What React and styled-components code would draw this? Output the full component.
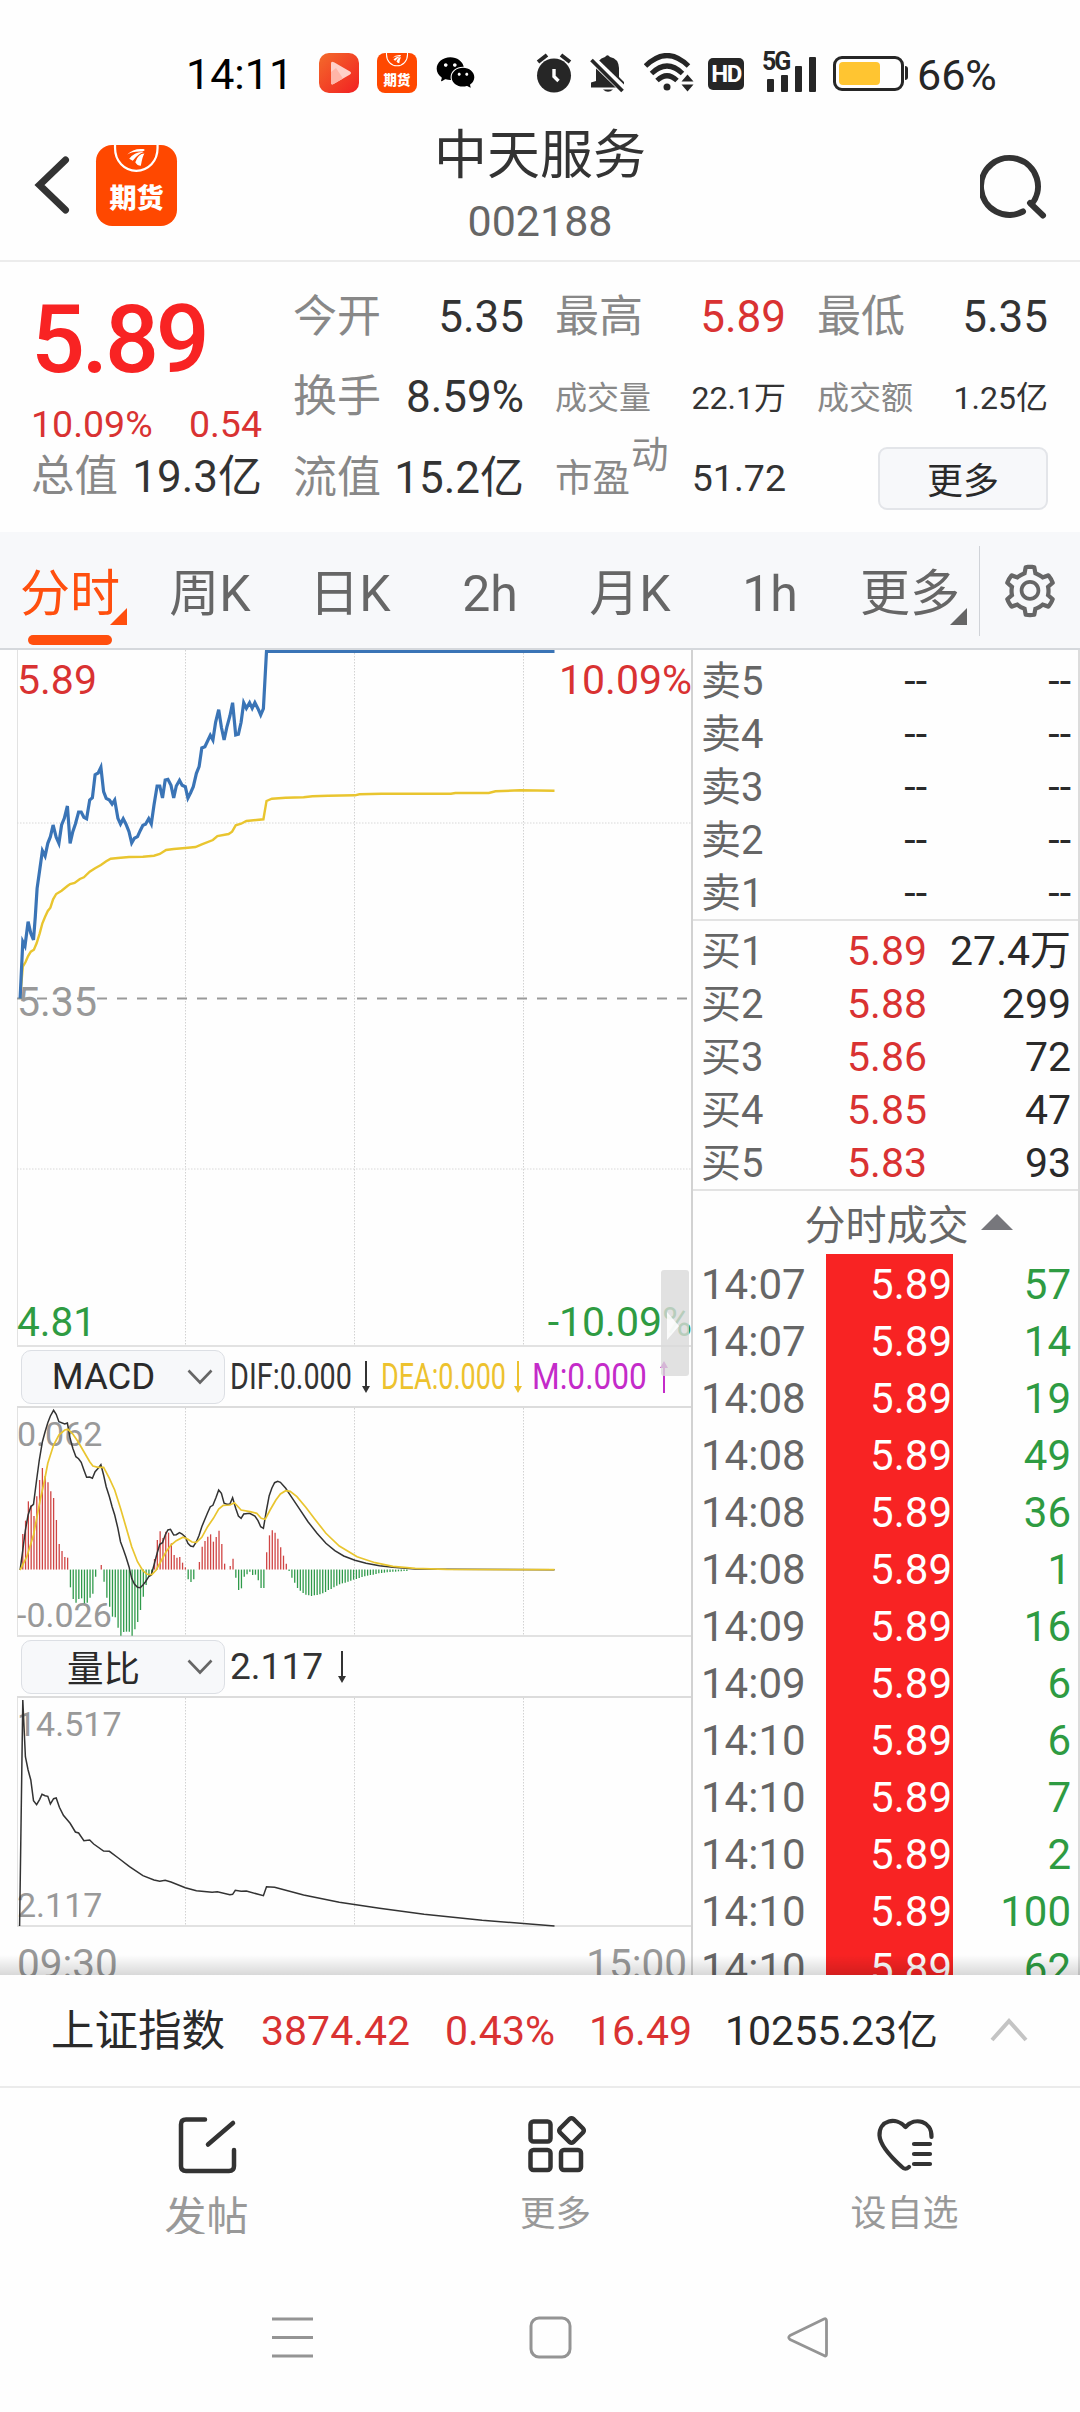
import React from "react";
import styled, { createGlobalStyle } from "styled-components";
import { AiOutlineSetting, AiFillWechat } from "react-icons/ai";

const RED = "#d93232";
const GREEN = "#2e9b42";
const BRAND = "#ff4f0e";
const INK = "#2a2a2a";
const MUTED = "#888";

const GlobalStyle = createGlobalStyle`
  * { box-sizing: border-box; }
  body {
    margin: 0;
    background: #fff;
    color: ${INK};
    font-family: Roboto, "Noto Sans CJK SC", sans-serif;
  }
`;

const Screen = styled.main`
  width: 1080px;
  height: 2412px;
  display: flex;
  flex-direction: column;
  overflow: hidden;
  background: #fefefe;
`;

const Text = styled.span`
  display: block;
  font-size: ${(p) => p.$size}px;
  line-height: ${(p) => Math.round(p.$size * 1.2)}px;
  color: ${(p) => p.$color || "#333"};
  font-weight: ${(p) => p.$weight || 400};
  letter-spacing: ${(p) => p.$track || 0}px;
  white-space: nowrap;
`;

/* ---------- status bar ---------- */

const StatusBar = styled.div`
  height: 100px;
  flex: none;
  display: flex;
  align-items: center;
  padding: 46px 0 0 186px;
  color: #262626;
  svg { display: block; flex: none; margin-top: -1px; }
`;

const Clock = styled(Text)`
  width: 133px;
  padding-top: 1px;
`;

const StatusSlot = styled.div`
  width: ${(p) => p.$w}px;
  flex: none;
`;

const PlayIcon = () => (
  <svg width="40" height="40" viewBox="0 0 40 40">
    <defs>
      <linearGradient id="play" x1="0" y1="0" x2="1" y2="1">
        <stop offset="0" stopColor="#f36b2b" />
        <stop offset="1" stopColor="#f21f22" />
      </linearGradient>
    </defs>
    <rect width="40" height="40" rx="10" fill="url(#play)" />
    <path d="M12 10.5 Q12 7.5 15 9.3 L31 18.5 Q33 20 31 21.5 L15 30.700 Q12 32.500 12 29.500Z" fill="#ffd0c8" />
    <path d="M12 19 L17 15 L24 25.500 L15 30.700 Q12 32.500 12 29.500Z" fill="#ffb5a8" />
  </svg>
);

const AppBadge = styled.div`
  width: ${(p) => p.$s}px;
  height: ${(p) => p.$s}px;
  border-radius: ${(p) => p.$s * 0.2}px;
  background: #ff4800;
  display: flex;
  flex-direction: column;
  align-items: center;
  overflow: hidden;
  flex: none;
  svg { margin: 0; }
`;

const BadgeText = styled.span`
  color: #fff;
  font-family: "Noto Sans CJK SC", sans-serif;
  font-weight: 900;
  font-size: ${(p) => p.$s * 0.335}px;
  line-height: ${(p) => p.$s * 0.4}px;
  margin-top: ${(p) => p.$s * 0.1}px;
`;

const FuturesBadge = ({ size }) => (
  <AppBadge $s={size}>
    <svg width={size * 0.6} height={size * 0.35} viewBox="0 0 48 28">
      <path d="M3 -1 V3 C3 16 12 25.500 24 25.500 S45 16 45 3 V-1" fill="none" stroke="#fff" strokeWidth="2.200" />
      <path d="M15 9.500 Q21 3 31 4 Q34 5 30 6.500 Q20 6 15 9.500Z" fill="#fff" />
      <path d="M17 13.500 Q23 6 31.500 7 Q26 8.500 20.500 15.500Z" fill="#fff" />
      <path d="M23 17 Q26 8.500 32 8.500 Q30 11.500 28.500 20.500 Q25 20.500 23 17Z" fill="#fff" />
    </svg>
    <BadgeText $s={size}>期货</BadgeText>
  </AppBadge>
);

const AlarmIcon = () => (
  <svg width="36" height="40" viewBox="0 0 36 40" fill="none" stroke="currentColor">
    <circle cx="18" cy="22.500" r="17" fill="currentColor" stroke="none" />
    <path d="M2 9 L11 2 M34 9 L25 2" strokeWidth="4" />
    <path d="M18 16 V23.500 L22.500 28" stroke="#fff" strokeWidth="3.400" />
  </svg>
);

const BellOffIcon = () => (
  <svg width="36" height="40" viewBox="0 0 36 40">
    <path d="M6 28 V17 Q7 5.500 15 4 Q17.500 .5 20 4 Q28.500 5.500 29 15 V24 L34 29 V34.500 H1 V29.500Z" fill="currentColor" />
    <path d="M13 36.500 H23 Q18 41 13 36.500Z" fill="currentColor" />
    <path d="M1 5 L35 38" stroke="#fefefe" strokeWidth="8" />
    <path d="M1.500 7 L32.500 38" stroke="currentColor" strokeWidth="3.800" />
  </svg>
);

const WifiIcon = () => (
  <svg width="50" height="40" viewBox="0 0 50 40" fill="none" stroke="currentColor">
    <path d="M1.500 13 Q23 -8 44.500 13" strokeWidth="5" />
    <path d="M7.500 20.500 Q23 5.500 38.500 20.500" strokeWidth="5" />
    <path d="M13 27.500 Q23 18 33 27.500" strokeWidth="5" />
    <circle cx="23" cy="34" r="3.500" fill="currentColor" stroke="none" />
    <path d="M43.500 21.500 L49.500 28.500 H37.500Z M43.500 38.500 L49.500 31.500 H37.500Z" fill="currentColor" stroke="none" />
  </svg>
);

const HdBadge = styled.div`
  width: 36px;
  height: 32px;
  border-radius: 5px;
  background: #262626;
  color: #fff;
  font-size: 24px;
  font-weight: 700;
  line-height: 33px;
  letter-spacing: -1.5px;
  text-align: center;
  margin-top: 2px;
`;

const Signal = styled.div`
  display: flex;
  align-items: flex-end;
  gap: 7px;
  height: 38px;
  padding-left: 4px;
  position: relative;
`;

const SignalBar = styled.i`
  width: 7px;
  height: ${(p) => p.$h}px;
  border-radius: 1px;
  background: #262626;
`;

const NetTag = styled.span`
  position: absolute;
  left: -1px;
  top: -4px;
  font-size: 25px;
  line-height: 24px;
  font-weight: 700;
  letter-spacing: -2px;
`;

const Battery = styled.div`
  width: 71px;
  height: 35px;
  border: 3px solid #262626;
  border-radius: 9px;
  padding: 3px;
  &::before {
    content: "";
    display: block;
    width: 41px;
    height: 23px;
    border-radius: 4px;
    background: #ffc531;
  }
`;

const BatteryTip = styled.i`
  width: 3px;
  height: 14px;
  margin-left: 1px;
  border-radius: 0 3px 3px 0;
  background: #262626;
`;

const BatteryLevel = styled(Text)`
  margin-left: 9px;
  padding-top: 3px;
`;

/* ---------- header ---------- */

const Header = styled.header`
  height: 162px;
  flex: none;
  display: grid;
  grid-template-columns: 200px 1fr 200px;
  border-bottom: 2px solid #ececec;
`;

const HeaderLeft = styled.div`
  display: flex;
  align-items: center;
  gap: 26px;
  padding: 10px 0 0 34px;
`;

const HeaderTitle = styled.div`
  display: flex;
  flex-direction: column;
  align-items: center;
  gap: 7px;
  padding-top: 24px;
`;

const HeaderRight = styled.div`
  display: flex;
  justify-content: flex-end;
  align-items: center;
  padding: 9px 32px 0 0;
`;

/* ---------- quote summary ---------- */

const Quote = styled.section`
  height: 270px;
  flex: none;
  display: flex;
  gap: 31px;
  padding: 15px 32px 0 31px;
`;

const PriceColumn = styled.div`
  width: 231px;
  display: flex;
  flex-direction: column;
`;

const BigPrice = styled.div`
  height: 124px;
  display: flex;
  align-items: center;
  color: #f82323;
  font-size: 95px;
  font-weight: 500;
  letter-spacing: -3.2px;
`;

const SplitRow = styled.div`
  height: ${(p) => p.$h}px;
  display: flex;
  align-items: center;
  justify-content: space-between;
`;

const StatGrid = styled.div`
  flex: 1;
  display: grid;
  grid-template-columns: repeat(3, 1fr);
  grid-template-rows: repeat(3, 80.5px);
  column-gap: 31px;
`;

const Raised = styled.span`
  vertical-align: 23px;
  line-height: 0;
  margin-left: 1px;
`;

const MoreButton = styled.button`
  justify-self: end;
  align-self: center;
  width: 170px;
  height: 63px;
  padding: 0;
  border: 2px solid #e3e5e9;
  border-radius: 9px;
  background: #f7f8fa;
  color: ${INK};
  font: 400 36px Roboto, "Noto Sans CJK SC", sans-serif;
`;

/* ---------- period tabs ---------- */

const Tabs = styled.nav`
  height: 118px;
  flex: none;
  display: flex;
  background: #f7f8fa;
  border-bottom: 2px solid #d5d8dc;
`;

const Tab = styled.div`
  width: 140px;
  flex: none;
  display: flex;
  flex-direction: column;
  align-items: center;
  position: relative;
  color: ${(p) => (p.$active ? BRAND : "#666")};
  font-size: 50px;
  line-height: 60px;
  padding-top: 32px;
  ${(p) =>
    p.$active &&
    `&::after { content: ""; width: 84px; height: 10px; margin-top: 11px; border-radius: 5px; background: ${BRAND}; }`}
`;

const Corner = styled.i`
  position: absolute;
  right: 13px;
  top: 76px;
  width: 17px;
  height: 17px;
  background: currentColor;
  clip-path: polygon(100% 0, 100% 100%, 0 100%);
`;

const SettingsSlot = styled.div`
  flex: 1;
  height: 90px;
  margin: 14px 0 0 -1px;
  border-left: 1px solid #d0d3d8;
  display: flex;
  align-items: center;
  justify-content: center;
  color: #666;
`;

/* ---------- charts ---------- */

const Body = styled.section`
  height: 1325px;
  flex: none;
  display: flex;
  overflow: hidden;
  position: relative;
  &::after {
    content: "";
    position: absolute;
    left: 0;
    right: 0;
    bottom: 0;
    height: 20px;
    background: linear-gradient(rgba(0, 0, 0, 0), rgba(0, 0, 0, 0.15));
  }
`;

const ChartColumn = styled.div`
  width: 693px;
  flex: none;
  padding-left: 17px;
  border-right: 2px solid #d2d2d2;
  position: relative;
`;

const Panel = styled.div`
  height: ${(p) => p.$h}px;
  position: relative;
  border-bottom: 2px solid #e2e2e2;
  border-left: 1px solid #e2e2e2;
  svg { position: absolute; left: -1px; top: 0; display: block; }
`;

const ChartLabel = styled(Text)`
  position: absolute;
  line-height: 40px;
  ${(p) => (p.$right !== undefined ? `right: ${p.$right}px;` : `left: ${p.$left || -1}px;`)}
  top: ${(p) => p.$top}px;
`;

const IndicatorBar = styled.div`
  height: ${(p) => p.$h}px;
  display: flex;
  align-items: center;
  padding-left: 4px;
  border-bottom: 2px solid #dcdcdc;
`;

const Select = styled.div`
  width: 204px;
  height: 54px;
  flex: none;
  display: flex;
  align-items: center;
  border: 1.5px solid #dcdfe4;
  border-radius: 10px;
  background: #f7f8fa;
  color: ${INK};
  font-size: 36.5px;
  margin-right: 5px;
  span { flex: 1; text-align: center; padding-right: 2px; }
  svg { margin-right: 11px; }
`;

const Reading = styled.div`
  width: ${(p) => p.$w}px;
  flex: none;
  display: flex;
  align-items: center;
  color: ${(p) => p.$color};
  font-size: 36px;
  svg { flex: none; }
`;

const Narrow = styled.span`
  width: ${(p) => p.$w}px;
  flex: none;
  white-space: nowrap;
  transform: scaleX(${(p) => p.$ratio});
  transform-origin: left center;
`;

const DrawerHandle = styled.div`
  position: absolute;
  left: 661px;
  top: 620px;
  width: 28px;
  height: 106px;
  border-radius: 3px;
  background: rgba(217, 217, 217, 0.8);
  &::after {
    content: "";
    position: absolute;
    left: 6px;
    top: 42px;
    width: 12px;
    height: 28px;
    background: #fff;
    opacity: 0.85;
    clip-path: polygon(0 0, 100% 50%, 0 100%);
  }
`;

const AxisRow = styled.div`
  display: flex;
  justify-content: space-between;
  padding: 13px 4px 0 0;
`;

const trace = (points, offset) =>
  points.map(([x, y]) => `${(x / 2.24 - 17).toFixed(1)},${(y / 3 - offset).toFixed(1)}`).join(" ");

const PRICE = [
  [45,1076],[51,905],[56,918],[63,845],[69,880],[75,900],[79,830],[83,745],[89,690],[95,632],[101,648],[107,610],[113,590],[119,555],[126,592],[132,610],[138,555],[144,535],[151,498],[157,610],[163,575],[169,552],[176,516],[182,516],[188,532],[194,536],[201,480],[207,473],[213,404],[220,399],[226,382],[232,455],[238,475],[245,480],[251,492],[257,480],[264,535],[270,552],[276,536],[282,552],[289,575],[295,609],[301,595],[308,590],[314,572],[320,556],[326,553],[333,536],[339,552],[345,495],[352,438],[358,438],[364,474],[370,420],[376,418],[383,436],[389,474],[395,438],[402,421],[408,436],[415,440],[421,474],[427,458],[433,440],[440,400],[446,380],[452,324],[459,320],[465,303],[471,286],[477,300],[483,247],[490,209],[496,262],[502,300],[508,262],[515,228],[521,188],[528,285],[534,283],[540,247],[546,188],[552,205],[559,188],[565,205],[571,188],[578,206],[584,225],[590,206],[597,34],[1242,34],
];
const AVERAGE = [
  [45,1076],[51,980],[57,967],[63,948],[69,935],[76,929],[82,910],[89,880],[95,850],[101,830],[107,813],[113,803],[119,778],[126,762],[138,752],[151,738],[157,732],[167,729],[179,717],[188,712],[201,695],[213,685],[226,675],[238,664],[248,656],[264,654],[289,651],[320,650],[345,647],[358,642],[372,630],[389,627],[415,624],[438,621],[452,613],[477,600],[487,588],[512,582],[520,575],[528,556],[540,551],[552,543],[590,538],[597,483],[609,476],[640,473],[680,472],[700,469],[735,467],[795,466],[805,463],[855,461],[1010,461],[1020,459],[1095,459],[1110,454],[1165,451],[1242,452],
];
const DIF = [
  [45,930],[51,870],[57,810],[63,765],[69,740],[75,733],[82,660],[88,600],[95,545],[101,515],[107,488],[113,468],[120,451],[126,463],[132,485],[145,492],[151,489],[157,535],[163,565],[170,590],[176,596],[182,607],[188,630],[194,652],[201,651],[207,655],[213,635],[220,625],[226,614],[232,645],[238,680],[245,710],[251,740],[257,765],[264,805],[270,845],[276,867],[282,890],[289,920],[295,955],[301,972],[308,982],[314,983],[320,975],[326,965],[333,950],[339,945],[345,915],[352,880],[358,853],[364,848],[370,825],[376,810],[382,808],[389,825],[395,824],[402,818],[408,822],[415,831],[421,850],[427,858],[433,860],[440,845],[446,826],[452,800],[465,758],[471,740],[477,736],[484,712],[490,690],[496,700],[502,730],[508,733],[515,732],[521,713],[528,745],[534,768],[540,775],[546,762],[559,760],[571,768],[578,782],[584,800],[590,805],[597,750],[603,707],[609,684],[615,668],[622,664],[628,667],[640,685],[655,715],[670,745],[690,785],[710,820],[730,850],[750,872],[770,888],[795,901],[820,910],[850,917],[880,922],[930,927],[1000,928],[1242,929],
];
const DEA = [
  [45,930],[60,890],[75,825],[90,720],[100,660],[107,610],[120,555],[132,525],[145,510],[152,508],[163,522],[175,545],[188,575],[201,605],[208,618],[220,622],[232,622],[245,655],[257,690],[270,745],[282,800],[295,860],[308,905],[320,932],[330,943],[340,944],[350,930],[362,900],[372,875],[383,855],[395,842],[410,832],[420,837],[430,846],[440,847],[452,832],[465,800],[478,775],[490,747],[500,736],[515,735],[525,728],[540,750],[560,755],[575,760],[585,775],[594,778],[605,750],[618,720],[628,702],[640,692],[650,694],[665,710],[685,742],[705,777],[730,820],[760,858],[800,890],[840,908],[880,919],[930,925],[1000,928],[1242,929],
];
const HISTOGRAM = [
  822,782,724,735,768,709,660,624,648,667,694,714,780,852,873,891,893,982,1017,1028,1017,1015,1030,1028,1013,1001,950,929,915,965,1013,1040,1070,1072,1103,1127,1116,1115,1115,1127,1108,1086,1050,1010,975,950,940,897,840,814,834,815,818,850,885,893,891,908,922,958,966,958,929,906,860,843,830,823,845,831,812,852,911,929,918,896,953,990,985,950,943,935,945,944,961,984,984,877,826,811,818,836,862,887,911,933,953,968,984,992,999,1004,1006,1008,1006,1005,1003,1000,996,990,987,982,977,973,970,968,965,962,959,957,954,951,949,947,945,944,942,940,939,938,937,936,935,935,934,934,933,933,
];
const VOLUME_RATIO = [
  [44,888],[51,210],[57,380],[63,420],[69,450],[75,512],[82,524],[89,508],[94,493],[101,497],[107,499],[113,522],[120,506],[126,504],[133,532],[142,556],[157,580],[169,606],[176,609],[188,632],[201,630],[210,642],[232,663],[245,664],[265,684],[290,710],[320,737],[345,750],[358,754],[370,751],[383,756],[415,773],[440,782],[475,787],[487,785],[515,794],[521,793],[527,781],[540,784],[552,783],[590,797],[597,770],[615,772],[680,795],[760,817],[850,835],[950,853],[1080,871],[1242,888],
];

const Grid = ({ h }) => (
  <g stroke="#d2d2d2" strokeWidth="1" strokeDasharray="1.500 1.500">
    {[168.5, 337.5, 506.5].map((x) => (
      <line key={x} x1={x} x2={x} y1="0" y2={h} />
    ))}
  </g>
);

const Trend = ({ up }) => (
  <svg width="10" height="34" viewBox="0 0 10 34" fill="currentColor" transform={up ? "scale(1 -1)" : undefined}>
    <path d="M4 1 H6 V26 H9 L5 33 L1 26 H4Z" />
  </svg>
);

const Chevron = () => (
  <svg width="26" height="16" viewBox="0 0 26 16" fill="none" stroke="#666" strokeWidth="2.600">
    <path d="M1.500 1.500 L13 13.500 L24.500 1.500" />
  </svg>
);

/* ---------- order book ---------- */

const BookColumn = styled.div`
  flex: 1;
  border-right: 2px solid #dcdcdc;
`;

const BookGroup = styled.div`
  padding: ${(p) => p.$pad};
  border-bottom: 2px solid #e3e3e3;
`;

const BookRow = styled.div`
  height: 53px;
  display: grid;
  grid-template-columns: 63px 163px 1fr;
  padding: 0 7px 0 8px;
  font-size: 41px;
  line-height: 55px;
  white-space: nowrap;
  span { text-align: right; color: ${INK}; }
  span:first-child { text-align: left; color: #666; font-size: 40px; }
  span:nth-child(2) { color: ${(p) => (p.$live ? RED : INK)}; }
`;

const TradeHeader = styled.div`
  height: 63px;
  display: flex;
  align-items: center;
  justify-content: center;
  gap: 12px;
  padding: 0 0 2px 46px;
  color: #666;
  font-size: 41px;
`;

const TradeRow = styled.div`
  height: 57px;
  display: grid;
  grid-template-columns: 133px 127px 1fr;
  font-size: 42px;
  line-height: 61px;
  padding-right: 7px;
  color: ${GREEN};
  span { text-align: right; }
  span:first-child { color: #666; text-align: left; padding-left: 8px; }
  span:nth-child(2) { color: #fff; background: #f82323; padding-right: 1px; }
`;

/* ---------- footer ---------- */

const Ticker = styled.div`
  height: 113px;
  flex: none;
  display: flex;
  align-items: center;
  padding: 2px 52px 0 51px;
  border-bottom: 2px solid #ebebeb;
  svg { margin-top: -3px; }
`;

const TickerCell = styled(Text)`
  width: ${(p) => p.$w}px;
  flex: none;
`;

const Actions = styled.nav`
  height: 163px;
  flex: none;
  display: grid;
  grid-template-columns: repeat(3, 349px);
  padding-left: 32px;
`;

const Action = styled.div`
  display: flex;
  flex-direction: column;
  align-items: center;
  padding-top: 27px;
`;

const ActionLabel = styled.span`
  color: #999;
  font-size: ${(p) => p.$size}px;
  line-height: 44px;
  height: ${(p) => p.$clip || 44}px;
  margin-top: ${(p) => p.$top}px;
  overflow: hidden;
`;

const SystemNav = styled.div`
  flex: none;
  display: flex;
  gap: 215px;
  padding: 65px 0 0 271px;
`;

const asks = [5, 4, 3, 2, 1];
const bids = [["买1","5.89","27.4万"],["买2","5.88","299"],["买3","5.86","72"],["买4","5.85","47"],["买5","5.83","93"]];
const trades = [["14:07",57],["14:07",14],["14:08",19],["14:08",49],["14:08",36],["14:08",1],["14:09",16],["14:09",6],["14:10",6],["14:10",7],["14:10",2],["14:10",100],["14:10",62]];

const Stat = ({ label, value, size = 44, labelSize = size, color }) => (
  <SplitRow $h={80}>
    <Text $size={labelSize} $color={MUTED}>{label}</Text>
    <Text $size={size} $color={color}>{value}</Text>
  </SplitRow>
);

export default function App() {
  return (
    <Screen>
      <GlobalStyle />
      <StatusBar>
        <Clock $size={43} $color="#000">14:11</Clock>
        <StatusSlot $w={58}><PlayIcon /></StatusSlot>
        <StatusSlot $w={57}><FuturesBadge size={40} /></StatusSlot>
        <StatusSlot $w={102}><AiFillWechat size={43} color="#000" /></StatusSlot>
        <StatusSlot $w={54}><AlarmIcon /></StatusSlot>
        <StatusSlot $w={54}><BellOffIcon /></StatusSlot>
        <StatusSlot $w={64}><WifiIcon /></StatusSlot>
        <StatusSlot $w={55}><HdBadge>HD</HdBadge></StatusSlot>
        <StatusSlot $w={70}>
          <Signal>
            <NetTag>5G</NetTag>
            <SignalBar $h={13} /><SignalBar $h={17} /><SignalBar $h={26} /><SignalBar $h={35} />
          </Signal>
        </StatusSlot>
        <Battery />
        <BatteryTip />
        <BatteryLevel $size={43} $color="#262626">66%</BatteryLevel>
      </StatusBar>

      <Header>
        <HeaderLeft>
          <svg width="36" height="60" viewBox="0 0 36 60" fill="none" stroke="#333" strokeWidth="7" strokeLinecap="round">
            <path d="M31.500 5 L5.500 30 L31.500 55" />
          </svg>
          <FuturesBadge size={81} />
        </HeaderLeft>
        <HeaderTitle>
          <Text $size={53}>中天服务</Text>
          <Text $size={43} $color="#666">002188</Text>
        </HeaderTitle>
        <HeaderRight>
          <svg width="68" height="68" viewBox="0 0 68 68" fill="none" stroke="#333" strokeWidth="6" strokeLinecap="round">
            <path d="M43 60.500 A28.500 28.500 0 1 1 51.500 53.500 L50 52 L63 64.500" strokeLinejoin="round" />
          </svg>
        </HeaderRight>
      </Header>

      <Quote>
        <PriceColumn>
          <BigPrice>5.89</BigPrice>
          <SplitRow $h={46}>
            <Text $size={37.5} $color={RED}>10.09%</Text>
            <Text $size={37.5} $color={RED}>0.54</Text>
          </SplitRow>
          <SplitRow $h={60}>
            <Text $size={43.5} $color={MUTED}>总值</Text>
            <Text $size={44}>19.3亿</Text>
          </SplitRow>
        </PriceColumn>
        <StatGrid>
          <Stat label="今开" value="5.35" />
          <Stat label="最高" value="5.89" color={RED} />
          <Stat label="最低" value="5.35" />
          <Stat label="换手" value="8.59%" />
          <Stat label="成交量" value="22.1万" size={32} />
          <Stat label="成交额" value="1.25亿" size={32} />
          <Stat label="流值" value="15.2亿" />
          <Stat label={<>市盈<Raised>动</Raised></>} value="51.72" size={37.5} />
          <MoreButton>更多</MoreButton>
        </StatGrid>
      </Quote>

      <Tabs>
        <Tab $active>分时<Corner /></Tab>
        <Tab>周K</Tab>
        <Tab>日K</Tab>
        <Tab>2h</Tab>
        <Tab>月K</Tab>
        <Tab>1h</Tab>
        <Tab>更多<Corner /></Tab>
        <SettingsSlot><AiOutlineSetting size={60} /></SettingsSlot>
      </Tabs>

      <Body>
        <ChartColumn>
          <Panel $h={697}>
            <ChartLabel $size={41} $color={RED} $top={10}>5.89</ChartLabel>
            <ChartLabel $size={41} $color={RED} $top={10} $right={-1}>10.09%</ChartLabel>
            <ChartLabel $size={41} $color="#999" $top={332}>5.35</ChartLabel>
            <ChartLabel $size={40.5} $color={GREEN} $top={652}>4.81</ChartLabel>
            <ChartLabel $size={41} $color={GREEN} $top={652} $right={-1}>-10.09%</ChartLabel>
            <svg width="674" height="695" fill="none">
              <Grid h={695} />
              <path d="M0 173 H674 M0 519 H674" stroke="#d8d8d8" strokeDasharray="1.500 1.500" />
              <line x1="0" x2="674" y1="348.500" y2="348.500" stroke="#999" strokeWidth="2" strokeDasharray="10 10" />
              <polyline points={trace(AVERAGE, 10)} stroke="#e9c52f" strokeWidth="2.400" />
              <polyline points={trace(PRICE, 10)} stroke="#3a74b6" strokeWidth="3.200" />
            </svg>
          </Panel>
          <IndicatorBar $h={61}>
            <Select><span>MACD</span><Chevron /></Select>
            <Reading $w={151} $color="#333"><Narrow $w={131} $ratio={0.8}>DIF:0.000</Narrow><Trend /></Reading>
            <Reading $w={151} $color="#edc22e"><Narrow $w={132} $ratio={0.75}>DEA:0.000</Narrow><Trend /></Reading>
            <Reading $w={140} $color="#c42bc9"><Narrow $w={127} $ratio={0.88}>M:0.000</Narrow><Trend up /></Reading>
          </IndicatorBar>
          <Panel $h={229}>
            <ChartLabel $size={34} $color="#999" $top={6}>0.062</ChartLabel>
            <ChartLabel $size={34} $color="#999" $top={187}>-0.026</ChartLabel>
            <svg width="674" height="228" fill="none">
              <Grid h={228} />
              {HISTOGRAM.map((y, i) => {
                const x = (51 + i * 6.28) / 2.24 - 17;
                return (
                  <line key={i} x1={x} x2={x} y1="161.600" y2={y / 3 - 148} stroke={y < 929 ? "#d04544" : "#2f9a4a"} strokeWidth="1.300" />
                );
              })}
              <polyline points={trace(DIF, 148)} stroke="#333" strokeWidth="1.500" />
              <polyline points={trace(DEA, 148)} stroke="#e9c52f" strokeWidth="1.700" />
            </svg>
          </Panel>
          <IndicatorBar $h={61}>
            <Select><span>量比</span><Chevron /></Select>
            <Reading $w={200} $color="#333"><Narrow $w={107} $ratio={1.03}>2.117</Narrow><Trend /></Reading>
          </IndicatorBar>
          <Panel $h={229}>
            <ChartLabel $size={34} $color="#999" $top={6}>14.517</ChartLabel>
            <ChartLabel $size={34} $color="#999" $top={187}>2.117</ChartLabel>
            <svg width="674" height="229" fill="none">
              <Grid h={228} />
              <polyline points={trace(VOLUME_RATIO, 68)} stroke="#333" strokeWidth="1.500" />
            </svg>
          </Panel>
          <AxisRow>
            <Text $size={40.5} $color="#999">09:30</Text>
            <Text $size={40.5} $color="#999">15:00</Text>
          </AxisRow>
          <DrawerHandle />
        </ChartColumn>

        <BookColumn>
          <BookGroup $pad="4px 0 0">
            {asks.map((n) => (
              <BookRow key={n}><span>卖{n}</span><span>--</span><span>--</span></BookRow>
            ))}
          </BookGroup>
          <BookGroup $pad="3px 0 0">
            {bids.map(([name, price, qty]) => (
              <BookRow key={name} $live><span>{name}</span><span>{price}</span><span>{qty}</span></BookRow>
            ))}
          </BookGroup>
          <TradeHeader>
            分时成交
            <svg width="32" height="16" viewBox="0 0 32 16"><path d="M0 16 L16 0 L32 16Z" fill="#77777c" /></svg>
          </TradeHeader>
          {trades.map(([time, qty], i) => (
            <TradeRow key={i}><span>{time}</span><span>5.89</span><span>{qty}</span></TradeRow>
          ))}
        </BookColumn>
      </Body>

      <Ticker>
        <TickerCell $w={210} $size={43.5} $color={INK}>上证指数</TickerCell>
        <TickerCell $w={184} $size={41} $color={RED}>3874.42</TickerCell>
        <TickerCell $w={144} $size={41} $color={RED}>0.43%</TickerCell>
        <TickerCell $w={136} $size={41} $color={RED}>16.49</TickerCell>
        <TickerCell $w={265} $size={41} $color={INK}>10255.23亿</TickerCell>
        <svg width="38" height="24" viewBox="0 0 38 24" fill="none" stroke="#c4c4c4" strokeWidth="4">
          <path d="M2 22 L19 3 L36 22" />
        </svg>
      </Ticker>

      <Actions>
        <Action>
          <svg width="60" height="60" viewBox="0 0 60 60" fill="none" stroke="#333" strokeWidth="4.500" strokeLinecap="round">
            <path d="M28 4.500 H9 Q4 4.500 4 9.500 V51 Q4 56 9 56 H52 Q57 56 57 51 V35" />
            <path d="M56 8 L31 29.500" />
          </svg>
          <ActionLabel $size={42} $top={21} $clip={38}>发帖</ActionLabel>
        </Action>
        <Action>
          <svg width="60" height="60" viewBox="0 0 60 60" fill="none" stroke="#333" strokeWidth="4.500" strokeLinejoin="round">
            <rect x="4.500" y="6.500" width="20" height="20" rx="3" />
            <rect x="4.500" y="35" width="20" height="20" rx="3" />
            <rect x="35" y="35" width="20" height="20" rx="3" />
            <path d="M43.500 4 Q45.500 2.500 47.500 4 L57 13.500 Q58.500 15.500 57 17.500 L47.500 27 Q45.500 28.500 43.500 27 L34 17.500 Q32.500 15.500 34 13.500Z" />
          </svg>
          <ActionLabel $size={35.5} $top={17}>更多</ActionLabel>
        </Action>
        <Action>
          <svg width="60" height="60" viewBox="0 0 60 60" fill="none" stroke="#333" strokeWidth="4.200" strokeLinecap="round" strokeLinejoin="round">
            <path d="M56.500 22 C57 6 40 1.500 30.500 12 C21 1.500 4 5 4.500 20.500 C5 30 17 43 27 52 Q30 55.500 34 52" />
            <path d="M39 29 H55 M39 39 H55 M39 49 H55" />
          </svg>
          <ActionLabel $size={36} $top={17}>设自选</ActionLabel>
        </Action>
      </Actions>

      <SystemNav>
        <svg width="43" height="43" viewBox="0 0 43 43" fill="none" stroke="#949494" strokeWidth="3">
          <path d="M1 3 H42 M1 21.500 H42 M1 40 H42" />
        </svg>
        <svg width="43" height="43" viewBox="0 0 43 43" fill="none" stroke="#949494" strokeWidth="3">
          <rect x="2" y="2" width="39" height="39" rx="8" />
        </svg>
        <svg width="43" height="43" viewBox="0 0 43 43" fill="none" stroke="#949494" strokeWidth="2.800" strokeLinejoin="round">
          <path d="M37 3 Q39.500 2 39.500 5 V38 Q39.500 41 37 39.500 L3 23.500 Q.5 21.500 3 19.500Z" />
        </svg>
      </SystemNav>
    </Screen>
  );
}
